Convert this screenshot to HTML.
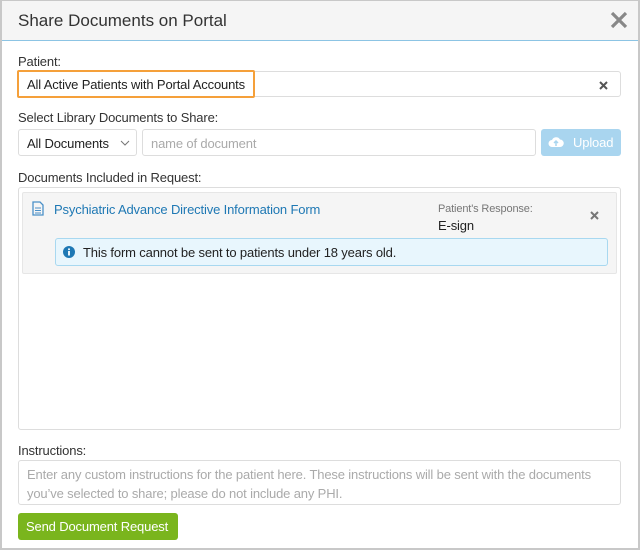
<!DOCTYPE html>
<html><head><style>
*{box-sizing:border-box;margin:0;padding:0}
body{width:640px;height:550px;background:#fff;font-family:"Liberation Sans",sans-serif;position:relative;overflow:hidden;color:#333;letter-spacing:-0.15px}
.frame{position:absolute;left:0;top:0;width:640px;height:550px;border:2px solid #c8c8c8;border-top-width:1px}
.hdr{position:absolute;left:2px;top:1px;width:636px;height:40px;background:#f5f5f5;border-bottom:1px solid #8cc4e4}
.abs{position:absolute}
.lbl{position:absolute;left:18px;font-size:13px;color:#333}
.inp{position:absolute;border:1px solid #ddd;border-radius:3px;background:#fff;font-size:13px}
</style></head><body>
<div class="frame"></div>
<div class="hdr"></div>
<div class="abs" style="left:18px;top:11px;font-size:17px;color:#333;letter-spacing:0">Share Documents on Portal</div>
<svg class="abs" style="left:610px;top:11px" width="18" height="18" viewBox="0 0 18 18"><path d="M2 2L16 16M16 2L2 16" stroke="#888" stroke-width="3.2"/></svg>

<div class="lbl" style="top:54px">Patient:</div>
<div class="inp" style="left:18px;top:71px;width:603px;height:26px"></div>
<div class="abs" style="left:17px;top:70px;width:238px;height:28px;border:2px solid #f5a03a;border-radius:2px;background:#fff;font-size:13px;color:#222;padding:5px 0 0 8px;white-space:nowrap">All Active Patients with Portal Accounts</div>
<svg class="abs" style="left:599px;top:81px" width="9" height="9" viewBox="0 0 9 9"><path d="M1 1L8 8M8 1L1 8" stroke="#555" stroke-width="2"/></svg>

<div class="lbl" style="top:110px">Select Library Documents to Share:</div>
<div class="inp" style="left:18px;top:129px;width:119px;height:27px;padding:6px 0 0 8px;color:#222">All Documents</div>
<svg class="abs" style="left:120px;top:140px" width="10" height="6" viewBox="0 0 10 6"><path d="M1 1L5 5L9 1" stroke="#777" fill="none"/></svg>
<div class="inp" style="left:142px;top:129px;width:394px;height:27px;padding:6px 0 0 8px;color:#aaa">name of document</div>
<div class="abs" style="left:541px;top:129px;width:80px;height:27px;background:#a9d5ef;border-radius:3px;color:#fff;font-size:13px;padding:6px 0 0 32px">Upload</div>
<svg class="abs" style="left:548px;top:136px" width="16" height="12" viewBox="0 0 16 12"><path d="M4 11A3.5 3.5 0 0 1 4 4A4.5 4.5 0 0 1 12 3.5A3.5 3.5 0 0 1 12 11Z" fill="#fff"/><path d="M8 5V10M6 7L8 5L10 7" stroke="#a9d5ef" stroke-width="1.5" fill="none"/></svg>

<div class="lbl" style="top:170px">Documents Included in Request:</div>
<div class="inp" style="left:18px;top:187px;width:603px;height:243px"></div>
<div class="abs" style="left:22px;top:192px;width:595px;height:82px;background:#f5f5f5;border:1px solid #e6e6e6;border-radius:2px"></div>
<svg class="abs" style="left:32px;top:201px" width="12" height="15" viewBox="0 0 12 15"><path d="M1 1H8L11 4V14H1Z" fill="none" stroke="#4a90c8" stroke-width="1.3"/><path d="M3 7H9M3 9.5H9M3 12H9" stroke="#4a90c8"/></svg>
<div class="abs" style="left:54px;top:202px;font-size:13px;color:#1e78b4">Psychiatric Advance Directive Information Form</div>
<div class="abs" style="left:438px;top:203px;font-size:11px;color:#777">Patient's Response:</div>
<div class="abs" style="left:438px;top:218px;font-size:13px;color:#222">E-sign</div>
<svg class="abs" style="left:590px;top:211px" width="9" height="9" viewBox="0 0 9 9"><path d="M1 1L8 8M8 1L1 8" stroke="#777" stroke-width="2"/></svg>
<div class="abs" style="left:55px;top:238px;width:553px;height:28px;background:#e8f6fd;border:1px solid #a8d8f0;border-radius:3px;font-size:13px;color:#222;padding:6px 0 0 27px">This form cannot be sent to patients under 18 years old.</div>
<svg class="abs" style="left:63px;top:246px" width="12" height="12" viewBox="0 0 12 12"><circle cx="6" cy="6" r="6" fill="#1e78b4"/><path d="M6 5V9.5" stroke="#fff" stroke-width="1.8"/><circle cx="6" cy="3.2" r="1" fill="#fff"/></svg>

<div class="lbl" style="top:443px">Instructions:</div>
<div class="inp" style="left:18px;top:460px;width:603px;height:45px;padding:4px 8px;color:#aaa;line-height:19px">Enter any custom instructions for the patient here. These instructions will be sent with the documents you’ve selected to share; please do not include any PHI.</div>
<div class="abs" style="left:18px;top:513px;width:160px;height:27px;background:#7ab51d;border-radius:3px;color:#fff;font-size:13px;padding:6px 0 0 8px">Send Document Request</div>
</body></html>
